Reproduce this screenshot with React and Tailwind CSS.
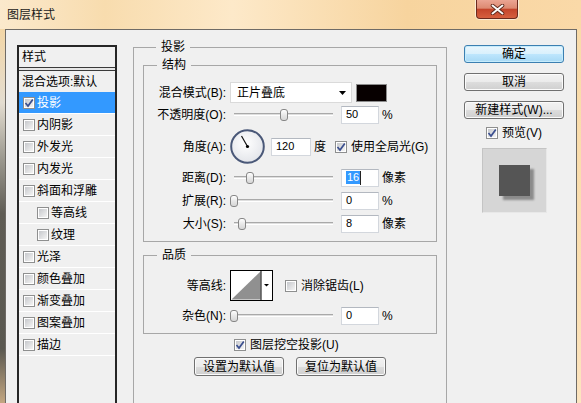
import React from 'react';

const layers = [
  { name: '投影', checked: true, selected: true },
  { name: '内阴影' },
  { name: '外发光' },
  { name: '内发光' },
  { name: '斜面和浮雕' },
  { name: '等高线', sub: true },
  { name: '纹理', sub: true },
  { name: '光泽' },
  { name: '颜色叠加' },
  { name: '渐变叠加' },
  { name: '图案叠加' },
  { name: '描边' },
];

function Check({ checked }) {
  return (
    <span className="flex h-[12px] w-[12px] shrink-0 items-center justify-center border border-[#8e8f8f] bg-white">
      <span className="relative flex h-[8px] w-[8px] items-center justify-center bg-[linear-gradient(135deg,#c6c8cc,#f4f4f4)]">
        {checked && (
          <svg width="10" height="10" viewBox="0 0 10 10" className="absolute -left-[1px] -top-[1px]">
            <path d="M1.5 5 L4 8 L8.8 1.5" fill="none" stroke="#3b4f8f" strokeWidth="1.7" />
          </svg>
        )}
      </span>
    </span>
  );
}

function Slider({ value }) {
  return (
    <div className="relative h-[14px] w-[107px] shrink-0">
      <div className="mx-[4px] mt-[5px] h-[3px] border-y border-t-[#a9a9a9] border-b-white bg-[#dedede]" />
      <div
        className="absolute top-[1px] h-[12px] w-[8px] rounded-[3px] border border-[#878787] bg-[linear-gradient(#fefefe,#e8e8e8_50%,#d6d6d6)]"
        style={{ left: Math.round(value * 0.99) }}
      />
    </div>
  );
}

function Field({ value, width = 'w-[38px]', selected }) {
  return (
    <div className={`flex h-[18px] shrink-0 items-center border border-[#d3d7dd] border-t-[#b3b8c0] bg-white pl-[4px] text-[11px] leading-none ${width}`}>
      {selected ? (
        <>
          <span className="bg-[#3399ff] px-[1px] py-[1px] text-white">{value}</span>
          <span className="h-[14px] w-px bg-[#222]" />
        </>
      ) : (
        value
      )}
    </div>
  );
}

function Label({ children }) {
  return <span className="w-[82px] shrink-0 text-right">{children}</span>;
}

function SliderRow({ label, value, unit, selected }) {
  return (
    <div className="mt-[4px] flex h-[19px] items-center gap-[4px]">
      <Label>{label}</Label>
      <Slider value={value} />
      <Field value={value} selected={selected} />
      <span className="-ml-[1px]">{unit}</span>
    </div>
  );
}

function Btn({ children, primary }) {
  return primary ? (
    <div className="flex h-[18px] w-[100px] items-center justify-center rounded-[3px] border border-[#3c7fb1] bg-[linear-gradient(#eaf6fd,#d9f0fc_50%,#bee6fd_50%,#a7d9f5)] leading-none shadow-[inset_0_0_0_1px_#c6ecfc]">
      {children}
    </div>
  ) : (
    <div className="flex h-[18px] w-[100px] items-center justify-center rounded-[3px] border border-[#707070] bg-[linear-gradient(#f2f2f2,#ebebeb_50%,#dddddd_50%,#cfcfcf)] leading-none shadow-[inset_0_0_0_1px_#fbfbfb]">
      {children}
    </div>
  );
}

function SmallBtn({ children }) {
  return (
    <div className="flex h-[19px] w-[90px] items-center justify-center rounded-[3px] border border-[#707070] bg-[linear-gradient(#f2f2f2,#ebebeb_50%,#dddddd_50%,#cfcfcf)] leading-none shadow-[inset_0_0_0_1px_#fbfbfb]">
      {children}
    </div>
  );
}

export default function App() {
  return (
    <div className="flex h-[403px] w-[581px] flex-col overflow-hidden bg-[#f8d9a8] font-['Liberation_Sans','Noto_Sans_CJK_SC',sans-serif] text-[12px] text-black">
      {/* title bar */}
      <div className="flex h-[29px] shrink-0 items-start bg-[linear-gradient(90deg,#fbe9cc,#f8dcae_18%,#fde9c9_40%,#f7d49e_70%,#fad9a8)]">
        <span className="ml-[7px] mt-[7px] leading-[16px] text-[#1a1a1a]">图层样式</span>
        <div className="ml-auto mr-[63px] flex h-[19px] w-[42px] items-center justify-center rounded-b-[4px] border border-t-0 border-[#6b2b1e] bg-[linear-gradient(#eba593,#dd8a72_45%,#c4452b_52%,#d6603f)] shadow-[0_0_0_1px_rgba(255,255,255,0.55)]">
          <svg width="15" height="11" viewBox="0 0 15 11">
            <path d="M2.5 1.5 L12.5 9.5 M12.5 1.5 L2.5 9.5" stroke="#5a2418" strokeWidth="3.6" strokeLinecap="round" />
            <path d="M2.5 1.5 L12.5 9.5 M12.5 1.5 L2.5 9.5" stroke="#fafafa" strokeWidth="2" strokeLinecap="round" />
          </svg>
        </div>
      </div>

      <div className="flex flex-1">
        <div className="w-[5px] bg-[linear-gradient(180deg,#f3d6a6_0%,#e4ddd0_18%,#9a978d_32%,#5f5c54_45%,#5a5850_78%,#c9ab84_92%,#e8c89a_100%)]" />

        {/* client area */}
        <div className="flex w-[572px] items-start border-x border-t border-[#6f6b66] bg-[#f0f0f0]">
          {/* style list */}
          <div className="ml-[11px] mt-[15px] h-[380px] w-[100px] shrink-0 border-2 border-[#262626]">
            <div className="flex h-[20px] items-center pl-[3px]">样式</div>
            <div className="h-[4px] border-y border-[#3a3a3a] bg-[#e6e6e6]" />
            <div className="flex h-[21px] items-center pl-[3px]">混合选项:默认</div>
            {layers.map((l) => (
              <div
                key={l.name}
                className={`flex h-[22px] items-center gap-[2px] border-b border-white ${l.sub ? 'pl-[18px]' : 'pl-[4px]'} ${l.selected ? 'bg-[#3399ff] text-white' : ''}`}
              >
                <Check checked={l.checked} />
                <span>{l.name}</span>
              </div>
            ))}
          </div>

          {/* drop shadow group */}
          <fieldset className="ml-[16px] mt-[9px] h-[400px] w-[314px] shrink-0 border border-[#a7a7a7] px-[9px]">
            <legend className="ml-[13px] h-[16px] px-[5px] leading-[16px]">投影</legend>

            <fieldset className="mt-[2px] border border-[#a7a7a7] pb-[8px]">
              <legend className="ml-[13px] h-[16px] px-[5px] leading-[16px]">结构</legend>

              <div className="mt-[9px] flex h-[21px] items-center gap-[4px]">
                <Label>混合模式(B):</Label>
                <div className="flex h-[21px] w-[122px] items-center border border-[#dadada] bg-white pl-[6px]">
                  <span>正片叠底</span>
                  <svg className="ml-auto mr-[5px]" width="7" height="4" viewBox="0 0 7 4">
                    <path d="M0 0 H7 L3.5 4 Z" fill="#000" />
                  </svg>
                </div>
                <div className="h-[18px] w-[31px] border border-[#8c8c8c] bg-[#070000]" />
              </div>

              <div className="mt-[2px] flex h-[19px] items-center gap-[4px]">
                <Label>不透明度(O):</Label>
                <Slider value={50} />
                <Field value={50} />
                <span className="-ml-[1px]">%</span>
              </div>

              <div className="mt-[5px] flex h-[35px] items-center">
                <Label>角度(A):</Label>
                <svg className="ml-[4px]" width="35" height="35" viewBox="0 0 35 35">
                  <defs>
                    <radialGradient id="dial" cx="45%" cy="40%" r="60%">
                      <stop offset="0%" stopColor="#ffffff" />
                      <stop offset="100%" stopColor="#e3e5ea" />
                    </radialGradient>
                  </defs>
                  <circle cx="17.5" cy="17.5" r="16.3" fill="url(#dial)" stroke="#4a5878" strokeWidth="2" />
                  <line x1="17.5" y1="17.5" x2="11.5" y2="7" stroke="#111" strokeWidth="1.2" />
                  <circle cx="17.5" cy="17.5" r="1.6" fill="#000" />
                </svg>
                <div className="ml-[6px]">
                  <Field value={120} width="w-[40px]" />
                </div>
                <span className="ml-[3px]">度</span>
                <span className="ml-[9px]">
                  <Check checked />
                </span>
                <span className="ml-[4px]">使用全局光(G)</span>
              </div>

              <div className="mt-[1px]">
                <SliderRow label="距离(D):" value={16} unit="像素" selected />
                <SliderRow label="扩展(R):" value={0} unit="%" />
                <SliderRow label="大小(S):" value={8} unit="像素" />
              </div>
            </fieldset>

            <fieldset className="mt-[5px] border border-[#a7a7a7] pb-[8px]">
              <legend className="ml-[13px] h-[16px] px-[5px] leading-[16px]">品质</legend>

              <div className="mt-[7px] flex h-[31px] items-center gap-[4px]">
                <Label>等高线:</Label>
                <svg width="43" height="31" viewBox="0 0 43 31">
                  <rect x="0.5" y="0.5" width="42" height="30" fill="#fff" stroke="#000" />
                  <polygon points="1.5,29.5 30.5,1.5 30.5,29.5" fill="#909090" />
                  <line x1="31" y1="1" x2="31" y2="30" stroke="#000" />
                  <path d="M34 14 H39 L36.5 16.5 Z" fill="#000" />
                </svg>
                <span className="ml-[8px]">
                  <Check />
                </span>
                <span>消除锯齿(L)</span>
              </div>

              <div className="mt-[5px] flex h-[19px] items-center gap-[4px]">
                <Label>杂色(N):</Label>
                <Slider value={0} />
                <Field value={0} />
                <span className="-ml-[1px]">%</span>
              </div>
            </fieldset>

            <div className="ml-[91px] mt-[5px] flex h-[12px] items-center gap-[4px]">
              <Check checked />
              <span>图层挖空投影(U)</span>
            </div>

            <div className="mt-[6px] flex justify-center gap-[12px]">
              <SmallBtn>设置为默认值</SmallBtn>
              <SmallBtn>复位为默认值</SmallBtn>
            </div>
          </fieldset>

          {/* buttons */}
          <div className="ml-[17px] mt-[15px] flex w-[100px] shrink-0 flex-col items-center">
            <Btn primary>确定</Btn>
            <div className="mt-[10px]">
              <Btn>取消</Btn>
            </div>
            <div className="mt-[10px]">
              <Btn>新建样式(W)...</Btn>
            </div>
            <div className="mt-[7px] flex h-[13px] items-center gap-[4px]">
              <Check checked />
              <span>预览(V)</span>
            </div>
            <div className="mt-[9px] flex h-[65px] w-[65px] items-center justify-center border border-[#c4c4c4] border-r-[#e8e8e8] border-b-[#e8e8e8] bg-[#d6d6d6]">
              <div className="h-[31px] w-[31px] bg-[#555555] shadow-[4px_4px_2px_rgba(0,0,0,0.35)]" />
            </div>
          </div>
        </div>

        <div className="flex-1 bg-[linear-gradient(180deg,#f9dba9,#fbdfb0_60%,#fde6c4)]" />
      </div>
    </div>
  );
}
